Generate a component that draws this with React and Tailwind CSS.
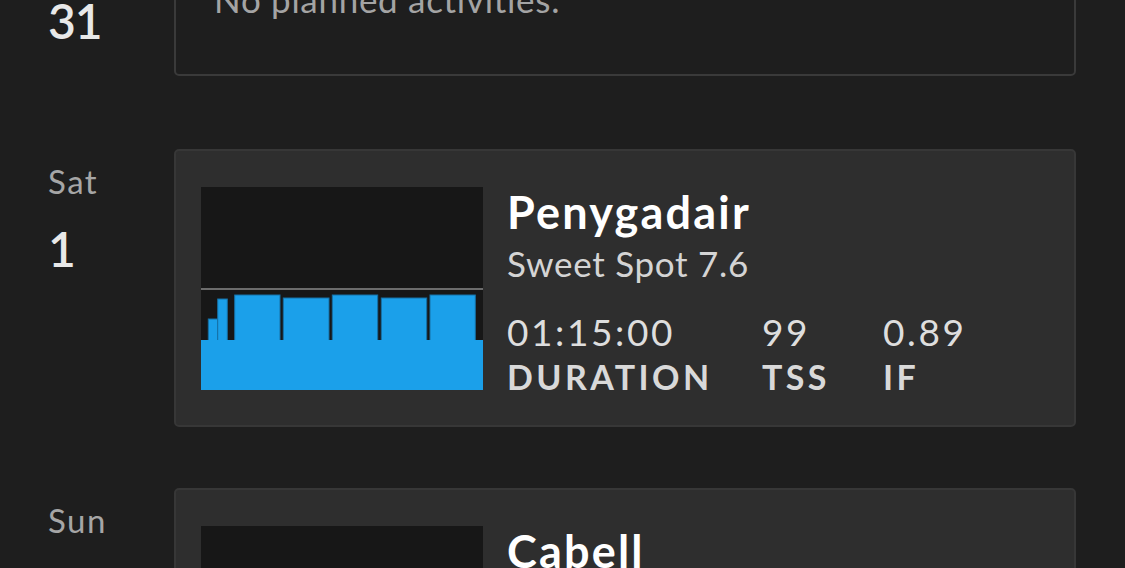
import React from 'react';

const penygadair = [
  { x: 7.3, w: 9.4, top: 132 },
  { x: 16.7, w: 9.6, top: 112 },
  { x: 33.7, w: 45.3, top: 108 },
  { x: 82.3, w: 45.7, top: 111 },
  { x: 131.3, w: 45.4, top: 108 },
  { x: 180.3, w: 45.4, top: 111 },
  { x: 229, w: 45.3, top: 108 },
];

const cabell = [
  { x: 7.3, w: 9.4, top: 132 },
  { x: 16.7, w: 9.6, top: 112 },
  { x: 33.7, w: 70, top: 110 },
  { x: 110, w: 70, top: 110 },
  { x: 186, w: 70, top: 110 },
];

const Chart = ({ blocks }) => (
  <svg width="282" height="203" viewBox="0 0 282 203" className="block shrink-0">
    <rect x="0" y="0" width="282" height="203" fill="#171717" />
    {blocks.map((b, i) => (
      <rect key={i} x={b.x} y={b.top} width={b.w} height={160 - b.top} fill="#1ba0ea" stroke="#1670a6" strokeWidth="1" />
    ))}
    <rect x="0" y="153" width="282" height="50" fill="#1ba0ea" />
    <rect x="0" y="101" width="282" height="2" fill="#6c6c6c" />
  </svg>
);

const Stat = ({ value, label, width }) => (
  <div className={width}>
    <div className="text-[37px] leading-[44px] text-[#dedede] font-normal tracking-[2.6px]">{value}</div>
    <div className="mt-[3px] text-[34px] leading-[40px] font-bold tracking-[0.1em] text-[#d9d9d9]">{label}</div>
  </div>
);

const DayLabel = ({ day, num }) => (
  <div className="w-[174px] shrink-0 pl-[48px] pt-[12px]">
    <div className="text-[33px] leading-[40px] text-[#a6a6a6] tracking-[1.5px]">{day}</div>
    <div className="mt-[24px] text-[48px] leading-[48px] font-semibold text-[#e8e8e8] tracking-[-1px]">{num}</div>
  </div>
);

const Workout = ({ day, num, title, subtitle, duration, tss, ifv, blocks, className }) => (
  <div className={`flex ${className}`}>
    <DayLabel day={day} num={num} />
    <div className="w-[902px] h-[278px] flex items-start overflow-hidden rounded-[5px] border-2 border-[#373737] bg-[#2e2e2e] pl-[25px] pt-[36px]">
      <Chart blocks={blocks} />
      <div className="ml-[24px] flex flex-col">
        <div className="text-[45px] leading-[50px] font-bold text-white tracking-[2.2px]">{title}</div>
        <div className="mt-[5px] text-[35px] leading-[42px] text-[#d4d4d4] tracking-[0.7px]">{subtitle}</div>
        <div className="mt-[26px] flex">
          <Stat value={duration} label="DURATION" width="w-[255px]" />
          <Stat value={tss} label="TSS" width="w-[121px]" />
          <Stat value={ifv} label="IF" width="w-[120px]" />
        </div>
      </div>
    </div>
  </div>
);

export default function App() {
  return (
    <div className="w-[1125px] h-[568px] overflow-hidden bg-[#1e1e1e] font-[Lato,sans-serif]">
      <div className="-mt-[79px]">
        <div className="flex">
          <DayLabel day="Fri" num="31" />
          <div className="w-[902px] h-[155px] rounded-[5px] border-2 border-[#3a3a3a] pl-[38px] pt-[55px]">
            <div className="text-[35px] leading-[42px] text-[#a4a4a4] tracking-[0.7px]">No planned activities.</div>
          </div>
        </div>
        <Workout
          className="mt-[73px]"
          day="Sat"
          num="1"
          title="Penygadair"
          subtitle="Sweet Spot 7.6"
          duration="01:15:00"
          tss="99"
          ifv="0.89"
          blocks={penygadair}
        />
        <Workout
          className="mt-[61px]"
          day="Sun"
          num="2"
          title="Cabell"
          subtitle="Sweet Spot 5.2"
          duration="01:30:00"
          tss="102"
          ifv="0.82"
          blocks={cabell}
        />
      </div>
    </div>
  );
}
